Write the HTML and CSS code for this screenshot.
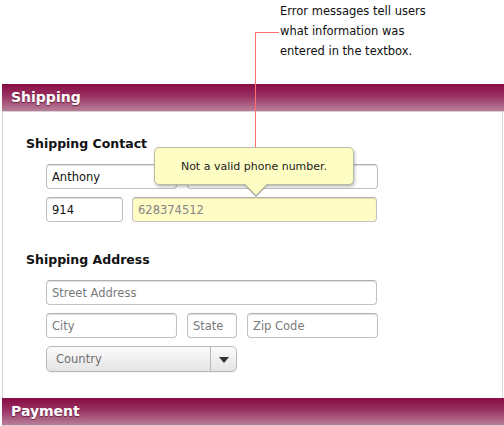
FILE: index.html
```html
<!DOCTYPE html>
<html>
<head>
<meta charset="utf-8">
<link rel="stylesheet" href="styles.css">
</head>
<body>
<div class="page">
  <div class="note">
    <p>Error messages tell users<br>what information was<br>entered in the textbox.</p>
  </div>
  <section class="panel">
    <h2 class="bar">Shipping</h2>
    <div class="body">
      <h3>Shipping Contact</h3>
      <div class="fields">
        <div class="row">
          <input class="field w131" type="text" value="Anthony">
          <input class="field w191" type="text" value="">
        </div>
        <div class="row">
          <input class="field w76" type="text" value="914">
          <input class="field w245 error" type="text" value="628374512">
        </div>
      </div>
      <h3 class="second">Shipping Address</h3>
      <div class="fields">
        <div class="row">
          <input class="field w331" type="text" placeholder="Street Address">
        </div>
        <div class="row">
          <input class="field w131" type="text" placeholder="City">
          <input class="field w49" type="text" placeholder="State">
          <input class="field w131" type="text" placeholder="Zip Code">
        </div>
        <div class="row">
          <div class="select">
            <span class="select-label">Country</span>
            <span class="select-btn"><span class="caret"></span></span>
          </div>
        </div>
      </div>
    </div>
  </section>
  <h2 class="bar">Payment</h2>

  <div class="leader">
    <span class="leader-h"></span>
    <span class="leader-v"></span>
    <span class="leader-dot"></span>
  </div>
  <div class="tooltip">
    <span class="tooltip-text">Not a valid phone number.</span>
    <span class="tooltip-arrow"></span>
  </div>
</div>
</body>
</html>
```

FILE: styles.css
```css
html, body {
  margin: 0;
  padding: 0;
  background: #ffffff;
}

body {
  font-family: "DejaVu Sans", "Liberation Sans", sans-serif;
  color: #1a1a1a;
}

.page {
  position: relative;
  width: 504px;
  height: 426px;
  overflow: hidden;
}

.note {
  height: 84px;
  padding-left: 280px;
  box-sizing: border-box;
}

.note p {
  margin: 0;
  padding-top: 1px;
  font-size: 11.5px;
  line-height: 20px;
  color: #111;
}

.panel {
  margin-left: 2px;
}

.bar {
  margin: 0 0 0 2px;
  height: 27px;
  line-height: 27px;
  padding-left: 9px;
  font-size: 14px;
  font-weight: bold;
  color: #ffffff;
  text-shadow: 0 1px 1px rgba(60, 0, 25, 0.6);
  background: linear-gradient(#870c43 0%, #9a3264 45%, #b88099 100%);
  border-bottom: 1px solid #d8d0d4;
}

.panel .bar {
  margin-left: 0;
}

.body {
  height: 286px;
  box-sizing: border-box;
  margin-right: 1px;
  border-left: 1px solid #d9d9d9;
  border-right: 1px solid #d9d9d9;
  padding: 24px 0 0 23px;
}

h3 {
  margin: 0;
  font-size: 12.5px;
  font-weight: bold;
  line-height: 16px;
  color: #111;
}

h3.second {
  margin-top: 30px;
}

.fields {
  display: flex;
  flex-direction: column;
  gap: 8px;
  padding-left: 20px;
  margin-top: 12px;
}

.row {
  display: flex;
  gap: 10px;
}

.field {
  box-sizing: border-box;
  height: 25px;
  margin: 0;
  padding: 0 0 0 5px;
  border: 1px solid #c2c2c2;
  border-top-color: #b0b0b0;
  border-radius: 4px;
  background: #ffffff;
  box-shadow: inset 0 1px 1px rgba(0, 0, 0, 0.12);
  font-family: "DejaVu Sans", "Liberation Sans", sans-serif;
  font-size: 11.5px;
  color: #111;
  outline: none;
}

.field::placeholder {
  color: #7a7a7a;
}

.field.error {
  background: #fffcc6;
  color: #858585;
}

.w49 { width: 50px; }
.w76 { width: 77px; }
.w131 { width: 131px; }
.w191 { width: 191px; }
.w245 { width: 245px; }
.w331 { width: 331px; }

.w245 { margin-left: -1px; }

.select {
  box-sizing: border-box;
  width: 191px;
  height: 26px;
  display: flex;
  border: 1px solid #b8b8b8;
  border-radius: 5px;
  background: linear-gradient(#fbfbfb, #e4e4e4);
  box-shadow: 0 1px 0 rgba(0, 0, 0, 0.05);
}

.select-label {
  flex: 1;
  padding-left: 9px;
  line-height: 24px;
  font-size: 11.5px;
  color: #6f6f6f;
}

.select-btn {
  width: 25px;
  border-left: 1px solid #b8b8b8;
  display: flex;
  align-items: center;
  justify-content: center;
}

.caret {
  width: 0;
  height: 0;
  border-left: 5px solid transparent;
  border-right: 5px solid transparent;
  border-top: 6px solid #333;
  margin-top: 1px;
}

/* annotation leader line */
.leader-h {
  position: absolute;
  left: 255px;
  top: 32px;
  width: 24px;
  height: 1px;
  background: #ff6f6f;
}

.leader-v {
  position: absolute;
  left: 255px;
  top: 32px;
  width: 1px;
  height: 123px;
  background: #ff6f6f;
}

.leader-dot {
  position: absolute;
  left: 252px;
  top: 152px;
  width: 7px;
  height: 7px;
  border-radius: 50%;
  background: #f47080;
}

/* tooltip */
.tooltip {
  position: absolute;
  left: 154px;
  top: 147px;
  width: 200px;
  height: 38px;
  box-sizing: border-box;
  border: 1px solid #b9b9a8;
  border-radius: 5px;
  background: #fefdc4;
  box-shadow: 1px 2px 3px rgba(0, 0, 0, 0.25);
  display: flex;
  align-items: center;
  justify-content: center;
}

.tooltip-text {
  font-size: 11px;
  color: #222;
}

.tooltip-arrow {
  position: absolute;
  left: 88px;
  bottom: -13px;
  width: 0;
  height: 0;
  border-left: 13px solid transparent;
  border-right: 13px solid transparent;
  border-top: 13px solid #a9a9a0;
}

.tooltip-arrow::after {
  content: "";
  position: absolute;
  left: -12px;
  top: -14px;
  width: 0;
  height: 0;
  border-left: 12px solid transparent;
  border-right: 12px solid transparent;
  border-top: 12px solid #fefdc4;
}
```
